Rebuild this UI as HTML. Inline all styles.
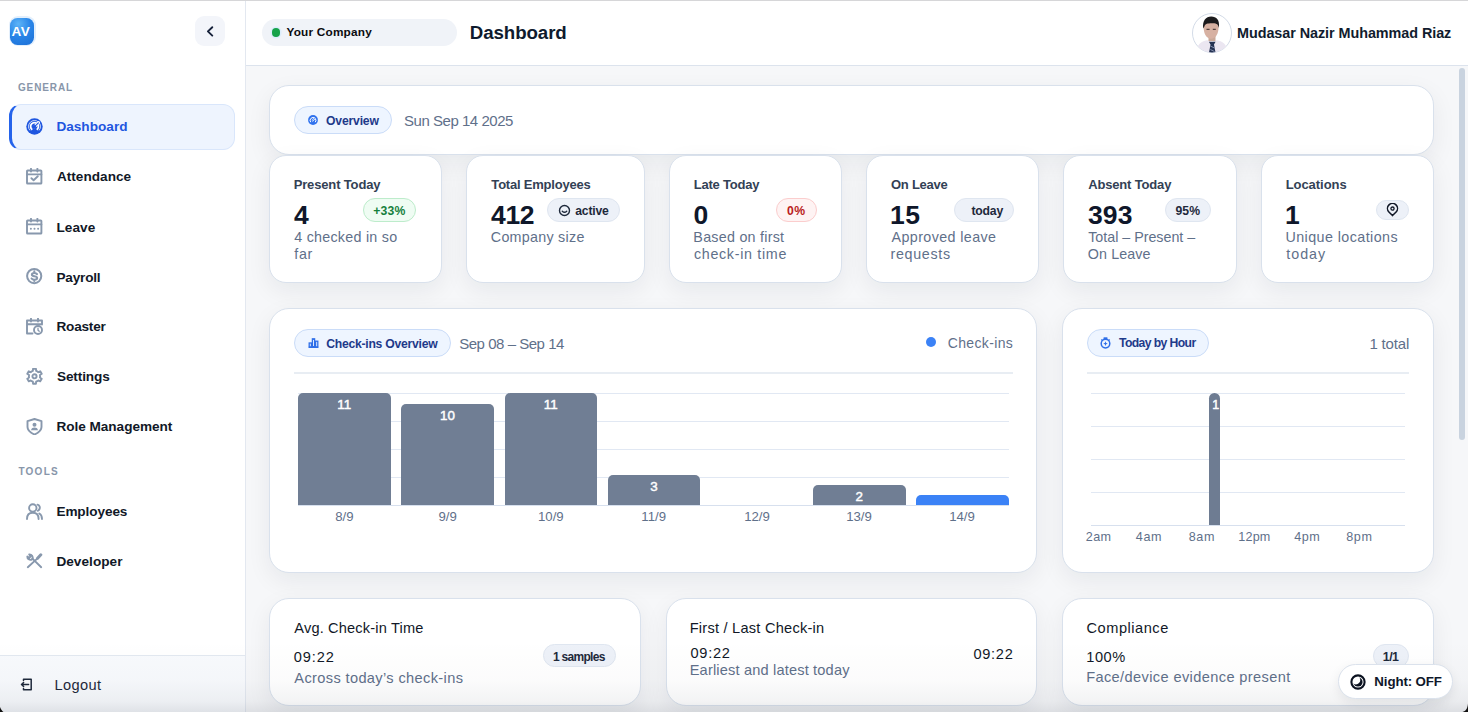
<!DOCTYPE html>
<html><head><meta charset="utf-8"><title>Dashboard</title>
<style>
*{box-sizing:border-box;margin:0;padding:0}
html,body{width:1468px;height:712px;overflow:hidden}
body{font-family:"Liberation Sans",sans-serif;background:#f6f7f9;position:relative}
.abs{position:absolute}
.t{position:absolute;white-space:nowrap}
.card{position:absolute;background:#fff;border:1px solid #d9e1ec;box-shadow:0 8px 24px rgba(15,23,42,0.065)}
.pill{position:absolute;border-radius:14px;background:#eef5ff;border:1px solid #cadcf8}
</style></head><body>
<div class="abs" style="left:0;top:0;width:245px;height:712px;background:#fff"></div><div class="abs" style="left:245px;top:0;width:1px;height:712px;background:#e3e8f0"></div><div class="abs" style="left:8.5px;top:16px;width:27px;height:30px;border-radius:9px;background:#e3effc"></div><div class="abs" style="left:10px;top:17.5px;width:24px;height:27px;border-radius:7.5px;background:radial-gradient(circle at 35% 22%,#5db4f7 0%,#2a86e8 45%,#1c6fd6 100%)"></div><div class="t" style="left:11.46px;top:24.68px;font-size:13.6px;line-height:13.6px;font-weight:bold;color:#fff;letter-spacing:0.600px;">AV</div><div class="abs" style="left:195px;top:16px;width:30px;height:30px;border-radius:9px;background:#f3f5fa"></div><svg class="abs" style="left:195px;top:16px" width="30" height="30" viewBox="0 0 30 30"><path d="M17.3 11.2 L12.9 15.4 L17.3 19.6" fill="none" stroke="#16213a" stroke-width="1.9" stroke-linecap="round" stroke-linejoin="round"/></svg><div class="t" style="left:17.90px;top:83.13px;font-size:10.0px;line-height:10.0px;font-weight:bold;color:#8896aa;letter-spacing:0.908px;">GENERAL</div><div class="abs" style="left:9px;top:103.5px;width:226px;height:46px;border-radius:12px;background:#eef4fe;border:1px solid #d9e6fb;border-left:3px solid #2563eb"></div><svg class="abs" style="left:25.5px;top:117.8px" width="17" height="17" viewBox="0 0 17 17">
<circle cx="8.5" cy="8.5" r="8.2" fill="#1f56e0"/>
<path d="M3.90 12.36 A6.0 6.0 0 1 1 13.10 12.36" fill="none" stroke="#dfe8fb" stroke-width="0.9"/>
<path d="M6.26 11.69 A3.9 3.9 0 1 1 10.74 11.69" fill="none" stroke="#fff" stroke-width="1.8"/>
<path d="M8.3 8.9 L12.6 4.6" stroke="#fff" stroke-width="2.8" stroke-linecap="round"/>
<path d="M8.3 8.9 L12.4 4.8" stroke="#1f56e0" stroke-width="1.2" stroke-linecap="round"/>
<circle cx="8.3" cy="8.9" r="1.8" fill="#1f56e0"/>
</svg><div class="t" style="left:56.42px;top:120.48px;font-size:13.6px;line-height:13.6px;font-weight:bold;color:#1f56e0;letter-spacing:0.009px;">Dashboard</div><div class="t" style="left:56.96px;top:170.48px;font-size:13.6px;line-height:13.6px;font-weight:bold;color:#111827;letter-spacing:0.011px;">Attendance</div><div class="t" style="left:56.42px;top:220.78px;font-size:13.6px;line-height:13.6px;font-weight:bold;color:#111827;letter-spacing:0.059px;">Leave</div><div class="t" style="left:56.42px;top:270.58px;font-size:13.6px;line-height:13.6px;font-weight:bold;color:#111827;letter-spacing:-0.187px;">Payroll</div><div class="t" style="left:56.42px;top:320.38px;font-size:13.6px;line-height:13.6px;font-weight:bold;color:#111827;letter-spacing:-0.195px;">Roaster</div><div class="t" style="left:56.96px;top:370.38px;font-size:13.6px;line-height:13.6px;font-weight:bold;color:#111827;letter-spacing:-0.119px;">Settings</div><div class="t" style="left:56.42px;top:420.28px;font-size:13.6px;line-height:13.6px;font-weight:bold;color:#111827;letter-spacing:-0.028px;">Role Management</div><div class="t" style="left:56.42px;top:505.48px;font-size:13.6px;line-height:13.6px;font-weight:bold;color:#111827;letter-spacing:-0.094px;">Employees</div><div class="t" style="left:56.42px;top:555.28px;font-size:13.6px;line-height:13.6px;font-weight:bold;color:#111827;letter-spacing:0.041px;">Developer</div><div class="t" style="left:18.40px;top:467.43px;font-size:10.0px;line-height:10.0px;font-weight:bold;color:#8896aa;letter-spacing:1.250px;">TOOLS</div><svg class="abs" style="left:25.5px;top:168px" width="17" height="17" viewBox="0 0 17 17"><rect x="1" y="2.5" width="14.4" height="13" rx="0.6" fill="none" stroke="#8898ad" stroke-width="1.9" stroke-linecap="round" stroke-linejoin="round"/><path d="M1 6.4 H15.4 M5 0.7 V3.6 M11.4 0.7 V3.6" fill="none" stroke="#8898ad" stroke-width="1.9" stroke-linecap="round" stroke-linejoin="round"/><path d="M5.4 10.2 L7.6 12.2 L11.8 8.2" fill="none" stroke="#8898ad" stroke-width="1.9" stroke-linecap="round" stroke-linejoin="round"/></svg><svg class="abs" style="left:25.5px;top:218px" width="17" height="17" viewBox="0 0 17 17"><rect x="1" y="2.5" width="14.4" height="13" rx="0.6" fill="none" stroke="#8898ad" stroke-width="1.9" stroke-linecap="round" stroke-linejoin="round"/><path d="M1 6.4 H15.4 M5 0.7 V3.6 M11.4 0.7 V3.6" fill="none" stroke="#8898ad" stroke-width="1.9" stroke-linecap="round" stroke-linejoin="round"/><circle cx="4.9" cy="10.8" r="1" fill="#8898ad"/><circle cx="8.5" cy="10.8" r="1" fill="#8898ad"/><circle cx="12.1" cy="10.8" r="1" fill="#8898ad"/></svg><svg class="abs" style="left:25.5px;top:268px" width="17" height="17" viewBox="0 0 17 17"><circle cx="8.2" cy="8.1" r="7.1" fill="none" stroke="#8898ad" stroke-width="2"/><path d="M11 6.1 C10.5 5.3 9.6 5 8.3 5 C6.8 5 5.9 5.7 5.9 6.7 C5.9 8.9 11.1 7.6 11.1 10 C11.1 11 10.1 11.7 8.4 11.7 C7.1 11.7 6.1 11.3 5.6 10.5 M8.3 3.4 V5 M8.3 11.7 V13" fill="none" stroke="#8898ad" stroke-width="2.1" stroke-linecap="round"/></svg><svg class="abs" style="left:25.5px;top:318px" width="17" height="17" viewBox="0 0 17 17"><path d="M6.5 15.5 H1 V2.5 H16 V6.5 M1 6.3 H16 M5 0.6 V3.5 M12 0.6 V3.5" fill="none" stroke="#8898ad" stroke-width="1.9" stroke-linecap="round" stroke-linejoin="round"/><circle cx="12" cy="12" r="4" fill="none" stroke="#8898ad" stroke-width="1.9" stroke-linecap="round" stroke-linejoin="round"/><path d="M12 10.2 V12.1 L13.2 13.2" fill="none" stroke="#8898ad" stroke-width="1.3" stroke-linecap="round"/></svg><svg class="abs" style="left:25.5px;top:368px" width="17" height="17" viewBox="0 0 17 17"><path d="M5.70 3.45 L6.86 2.94 L7.05 0.84 L9.95 0.84 L10.14 2.94 L11.30 3.45 L12.32 4.20 L14.24 3.31 L15.69 5.83 L13.96 7.04 L14.10 8.30 L13.96 9.56 L15.69 10.77 L14.24 13.29 L12.32 12.40 L11.30 13.15 L10.14 13.66 L9.95 15.76 L7.05 15.76 L6.86 13.66 L5.70 13.15 L4.68 12.40 L2.76 13.29 L1.31 10.77 L3.04 9.56 L2.90 8.30 L3.04 7.04 L1.31 5.83 L2.76 3.31 L4.68 4.20 Z" fill="none" stroke="#8898ad" stroke-width="1.9" stroke-linecap="round" stroke-linejoin="round"/><circle cx="8.5" cy="8.3" r="2.1" fill="none" stroke="#8898ad" stroke-width="1.9" stroke-linecap="round" stroke-linejoin="round"/></svg><svg class="abs" style="left:25.5px;top:418px" width="17" height="17" viewBox="0 0 17 17"><path d="M8.5 1 L15.5 3.2 V9 C15.5 12.5 12.5 14.8 8.5 16.5 C4.5 14.8 1.5 12.5 1.5 9 V3.2 Z" fill="none" stroke="#8898ad" stroke-width="1.9" stroke-linecap="round" stroke-linejoin="round"/><circle cx="8.5" cy="6.8" r="2" fill="#8898ad"/><path d="M5 12.2 C5.3 10 6.8 9.4 8.5 9.4 C10.2 9.4 11.7 10 12 12.2 Z" fill="#8898ad"/></svg><svg class="abs" style="left:25.5px;top:503px" width="17" height="17" viewBox="0 0 17 17"><circle cx="6.8" cy="5" r="3.7" fill="none" stroke="#8898ad" stroke-width="1.9" stroke-linecap="round" stroke-linejoin="round"/><path d="M1 16 C1 11.6 3.5 9.8 6.8 9.8 C10.1 9.8 12.6 11.6 12.6 16" fill="none" stroke="#8898ad" stroke-width="1.9" stroke-linecap="round" stroke-linejoin="round"/><path d="M11.5 1.6 C13.5 2.2 14.3 4.2 13.5 6 C13.1 6.9 12.6 7.4 11.9 7.8 M13.3 10.5 C15 11.5 16 13.3 16 16" fill="none" stroke="#8898ad" stroke-width="1.9" stroke-linecap="round" stroke-linejoin="round"/></svg><svg class="abs" style="left:25.5px;top:553px" width="17" height="17" viewBox="0 0 17 17"><path d="M1.8 14.2 L11.2 5.6" fill="none" stroke="#8898ad" stroke-width="1.9" stroke-linecap="round" stroke-linejoin="round"/><path d="M11.6 5.2 L14.8 1.8" fill="none" stroke="#8898ad" stroke-width="3" stroke-linecap="round"/><path d="M15.2 14.2 L6.2 5.4" fill="none" stroke="#8898ad" stroke-width="1.9" stroke-linecap="round" stroke-linejoin="round"/><path d="M6.6 5.8 C7.3 3.6 5.8 1.2 3.2 1.4 L4.6 3.4 L3.4 4.8 L1.3 3.6 C1.2 6 3.6 7.4 5.8 6.6" fill="none" stroke="#8898ad" stroke-width="1.9" stroke-linecap="round" stroke-linejoin="round"/></svg><div class="abs" style="left:0;top:655px;width:245px;height:57px;background:#f8fafd;border-top:1px solid #e2e8f0"></div><svg class="abs" style="left:20px;top:678px" width="13" height="13" viewBox="0 0 13 13"><path d="M3.5 1.2 H11.2 V11.8 H3.5 M3.5 1.2 V2.6 M3.5 11.8 V10.4 M8.6 6.5 H1.6 M3.6 4.5 L1.5 6.5 L3.6 8.5" fill="none" stroke="#1e293b" stroke-width="1.5" stroke-linecap="round" stroke-linejoin="round"/></svg><div class="t" style="left:54.53px;top:677.84px;font-size:14.6px;line-height:14.6px;font-weight:normal;color:#1e293b;letter-spacing:0.373px;">Logout</div><div class="abs" style="left:246px;top:0;width:1222px;height:66px;background:#fff;border-bottom:1px solid #dce3ed"></div><div class="abs" style="left:0;top:0;width:1468px;height:1px;background:#d6d6d8"></div><div class="abs" style="left:262px;top:19px;width:195px;height:27px;border-radius:13.5px;background:#f0f3f8"></div><div class="abs" style="left:271.8px;top:28.2px;width:8.4px;height:8.4px;border-radius:50%;background:#16a34a;box-shadow:0 0 0 1.6px #ddeefc"></div><div class="t" style="left:286.52px;top:26.71px;font-size:11.8px;line-height:11.8px;font-weight:bold;color:#0b0b0f;letter-spacing:0.197px;">Your Company</div><div class="t" style="left:469.78px;top:24.27px;font-size:18.7px;line-height:18.7px;font-weight:bold;color:#0f1b2e;letter-spacing:-0.073px;">Dashboard</div><svg class="abs" style="left:1192px;top:12.5px" width="40" height="40" viewBox="0 0 40 40">
<defs><clipPath id="av"><circle cx="20" cy="20" r="19.4"/></clipPath></defs>
<circle cx="20" cy="20" r="19.5" fill="#fff" stroke="#d3dbe7" stroke-width="1"/>
<g clip-path="url(#av)">
<path d="M4 40 C5 31 9 28.5 15 27.2 L20 28.5 L25 27.2 C31 28.5 35 31 36 40 Z" fill="#ebe6f1"/>
<rect x="16.5" y="22" width="7" height="6" fill="#c9a898"/>
<path d="M11.6 13 C11.4 21 14.5 25.6 19 25.8 C23.6 25.6 26.8 21 26.6 13 C26 9 23.5 7.5 19 7.5 C14.5 7.5 12 9 11.6 13 Z" fill="#d7b1a2"/>
<path d="M11.2 15.5 C10.2 7.5 14 3.5 19.2 3.5 C24.5 3.5 28 7 26.9 15 C26.2 11.5 25 10.3 21 10.2 C17 10 13 10.5 12.6 13 C12.2 13.8 11.8 14.6 11.2 15.5 Z" fill="#1c1b1d"/>
<path d="M14.5 16.3 H17.6 M20.8 16.3 H23.8" stroke="#3a2c2a" stroke-width="1"/>
<path d="M16.9 28.8 L23.6 28.8 L22 31.5 L23.6 40 L16.9 40 L18.5 31.5 Z" fill="#243252"/>
<path d="M18.3 33 L22.5 35 M18.3 36.5 L22.5 38.5" stroke="#8b96b5" stroke-width="0.9"/>
</g></svg><div class="t" style="left:1237.06px;top:25.61px;font-size:14.4px;line-height:14.4px;font-weight:bold;color:#111c2e;letter-spacing:-0.063px;">Mudasar Nazir Muhammad Riaz</div><div class="abs" style="left:1459px;top:68px;width:6px;height:372px;border-radius:3px;background:#c9d3df"></div><div class="card" style="left:269px;top:85px;width:1165px;height:70px;border-radius:20px"></div><div class="pill" style="left:294px;top:106px;width:97.5px;height:28px"></div><svg class="abs" style="left:307.5px;top:114.8px" width="10" height="10" viewBox="0 0 10 10"><circle cx="5" cy="5" r="4.9" fill="#2f72ee"/><path d="M2.7 7.2 A2.9 2.9 0 1 1 7.3 7.2" fill="none" stroke="#fff" stroke-width="1"/><path d="M4.6 5.6 L6.6 3.4" stroke="#fff" stroke-width="1.6" stroke-linecap="round"/><path d="M4.6 5.6 L6.5 3.5" stroke="#2f72ee" stroke-width="0.8" stroke-linecap="round"/></svg><div class="t" style="left:326.01px;top:114.67px;font-size:12.2px;line-height:12.2px;font-weight:bold;color:#1e3a8a;letter-spacing:-0.186px;">Overview</div><div class="t" style="left:404.02px;top:112.50px;font-size:15px;line-height:15px;font-weight:normal;color:#5f708a;letter-spacing:-0.470px;">Sun Sep 14 2025</div><div class="card" style="left:269px;top:155px;width:173px;height:128px;border-radius:17px"></div><div class="t" style="left:293.65px;top:178.39px;font-size:13px;line-height:13px;font-weight:bold;color:#334155;letter-spacing:-0.146px;">Present Today</div><div class="t" style="left:294.10px;top:201.76px;font-size:26.5px;line-height:26.5px;font-weight:bold;color:#0f172a;letter-spacing:0.000px;">4</div><div class="t" style="left:294.21px;top:230.19px;font-size:14.3px;line-height:14.3px;font-weight:normal;color:#5f708a;letter-spacing:0.255px;">4 checked in so</div><div class="t" style="left:294.36px;top:247.49px;font-size:14.3px;line-height:14.3px;font-weight:normal;color:#5f708a;letter-spacing:0.600px;">far</div><div class="card" style="left:466px;top:155px;width:179px;height:128px;border-radius:17px"></div><div class="t" style="left:491.37px;top:178.39px;font-size:13px;line-height:13px;font-weight:bold;color:#334155;letter-spacing:-0.209px;">Total Employees</div><div class="t" style="left:491.10px;top:201.76px;font-size:26.5px;line-height:26.5px;font-weight:bold;color:#0f172a;letter-spacing:-0.349px;">412</div><div class="t" style="left:490.79px;top:230.19px;font-size:14.3px;line-height:14.3px;font-weight:normal;color:#5f708a;letter-spacing:0.272px;">Company size</div><div class="card" style="left:669px;top:155px;width:173px;height:128px;border-radius:17px"></div><div class="t" style="left:693.65px;top:178.39px;font-size:13px;line-height:13px;font-weight:bold;color:#334155;letter-spacing:-0.191px;">Late Today</div><div class="t" style="left:693.57px;top:201.76px;font-size:26.5px;line-height:26.5px;font-weight:bold;color:#0f172a;letter-spacing:0.000px;">0</div><div class="t" style="left:693.36px;top:230.19px;font-size:14.3px;line-height:14.3px;font-weight:normal;color:#5f708a;letter-spacing:0.252px;">Based on first</div><div class="t" style="left:693.93px;top:247.49px;font-size:14.3px;line-height:14.3px;font-weight:normal;color:#5f708a;letter-spacing:0.685px;">check-in time</div><div class="card" style="left:866px;top:155px;width:173px;height:128px;border-radius:17px"></div><div class="t" style="left:890.98px;top:178.39px;font-size:13px;line-height:13px;font-weight:bold;color:#334155;letter-spacing:-0.241px;">On Leave</div><div class="t" style="left:889.91px;top:201.76px;font-size:26.5px;line-height:26.5px;font-weight:bold;color:#0f172a;letter-spacing:0.600px;">15</div><div class="t" style="left:891.50px;top:230.19px;font-size:14.3px;line-height:14.3px;font-weight:normal;color:#5f708a;letter-spacing:0.399px;">Approved leave</div><div class="t" style="left:890.57px;top:247.49px;font-size:14.3px;line-height:14.3px;font-weight:normal;color:#5f708a;letter-spacing:0.670px;">requests</div><div class="card" style="left:1063px;top:155px;width:174px;height:128px;border-radius:17px"></div><div class="t" style="left:1088.17px;top:178.39px;font-size:13px;line-height:13px;font-weight:bold;color:#334155;letter-spacing:-0.157px;">Absent Today</div><div class="t" style="left:1087.97px;top:201.76px;font-size:26.5px;line-height:26.5px;font-weight:bold;color:#0f172a;letter-spacing:0.117px;">393</div><div class="t" style="left:1088.21px;top:230.19px;font-size:14.3px;line-height:14.3px;font-weight:normal;color:#5f708a;letter-spacing:-0.019px;">Total – Present –</div><div class="t" style="left:1087.86px;top:247.49px;font-size:14.3px;line-height:14.3px;font-weight:normal;color:#5f708a;letter-spacing:0.089px;">On Leave</div><div class="card" style="left:1261px;top:155px;width:173px;height:128px;border-radius:17px"></div><div class="t" style="left:1285.65px;top:178.39px;font-size:13px;line-height:13px;font-weight:bold;color:#334155;letter-spacing:-0.045px;">Locations</div><div class="t" style="left:1284.91px;top:201.76px;font-size:26.5px;line-height:26.5px;font-weight:bold;color:#0f172a;letter-spacing:0.000px;">1</div><div class="t" style="left:1285.43px;top:230.19px;font-size:14.3px;line-height:14.3px;font-weight:normal;color:#5f708a;letter-spacing:0.435px;">Unique locations</div><div class="t" style="left:1286.29px;top:247.49px;font-size:14.3px;line-height:14.3px;font-weight:normal;color:#5f708a;letter-spacing:0.988px;">today</div><div class="abs" style="left:362.6px;top:198px;width:53.89999999999998px;height:24px;border-radius:12.0px;background:#effcf3;border:1px solid #bdeccb"></div><div class="t" style="left:373.31px;top:204.87px;font-size:12.2px;line-height:12.2px;font-weight:bold;color:#15803d;letter-spacing:0.152px;">+33%</div><div class="abs" style="left:547.1px;top:198px;width:72.60000000000002px;height:24px;border-radius:12.0px;background:#edf1f8;border:1px solid #dfe6f0"></div><div class="t" style="left:575.20px;top:204.87px;font-size:12.2px;line-height:12.2px;font-weight:bold;color:#1e293b;letter-spacing:-0.183px;">active</div><svg class="abs" style="left:557.5px;top:203.5px" width="13" height="13" viewBox="0 0 13 13"><circle cx="6.5" cy="6.5" r="5" fill="none" stroke="#1e293b" stroke-width="1.4"/><path d="M4.3 7.2 Q6.5 9.4 8.7 7.2" fill="none" stroke="#1e293b" stroke-width="1.4" stroke-linecap="round"/></svg><div class="abs" style="left:775.9px;top:198px;width:41.5px;height:24px;border-radius:12.0px;background:#fef3f3;border:1px solid #fbcdcd"></div><div class="t" style="left:786.97px;top:204.87px;font-size:12.2px;line-height:12.2px;font-weight:bold;color:#b91c1c;letter-spacing:0.600px;">0%</div><div class="abs" style="left:954.2px;top:198px;width:59.89999999999998px;height:24px;border-radius:12.0px;background:#edf1f8;border:1px solid #dfe6f0"></div><div class="t" style="left:971.48px;top:204.87px;font-size:12.2px;line-height:12.2px;font-weight:bold;color:#1e293b;letter-spacing:-0.198px;">today</div><div class="abs" style="left:1164.6px;top:198px;width:46.90000000000009px;height:24px;border-radius:12.0px;background:#edf1f8;border:1px solid #dfe6f0"></div><div class="t" style="left:1175.43px;top:204.87px;font-size:12.2px;line-height:12.2px;font-weight:bold;color:#1e293b;letter-spacing:0.085px;">95%</div><div class="abs" style="left:1376.1px;top:199.5px;width:32.600000000000136px;height:20.5px;border-radius:10.25px;background:#edf1f8;border:1px solid #dfe6f0"></div><svg class="abs" style="left:1386px;top:203px" width="13" height="14" viewBox="0 0 13 14"><path d="M6.5 12.6 L2.9 8.9 A5 5 0 1 1 10.1 8.9 Z" fill="none" stroke="#111827" stroke-width="1.5" stroke-linejoin="round"/><circle cx="6.5" cy="5.6" r="1.6" fill="none" stroke="#111827" stroke-width="1.3"/></svg><div class="card" style="left:269px;top:308px;width:768px;height:265px;border-radius:20px"></div><div class="pill" style="left:294px;top:329px;width:157px;height:27.5px"></div><svg class="abs" style="left:307.5px;top:337.5px" width="11" height="10" viewBox="0 0 11 10"><path d="M0.8 9.2 H10.2" stroke="#2f6fe8" stroke-width="1.6"/><rect x="1.2" y="5" width="2.2" height="4.2" fill="none" stroke="#2f6fe8" stroke-width="1.3"/><rect x="4.4" y="0.8" width="2.2" height="8.4" fill="none" stroke="#2f6fe8" stroke-width="1.3"/><rect x="7.6" y="3.2" width="2.2" height="6" fill="none" stroke="#2f6fe8" stroke-width="1.3"/></svg><div class="t" style="left:326.21px;top:337.57px;font-size:12.2px;line-height:12.2px;font-weight:bold;color:#1e3a8a;letter-spacing:-0.257px;">Check-ins Overview</div><div class="t" style="left:459.22px;top:336.40px;font-size:15px;line-height:15px;font-weight:normal;color:#5f708a;letter-spacing:-0.471px;">Sep 08 – Sep 14</div><div class="abs" style="left:926px;top:337.4px;width:10px;height:10px;border-radius:50%;background:#3b82f6"></div><div class="t" style="left:947.70px;top:336.35px;font-size:14px;line-height:14px;font-weight:normal;color:#5f708a;letter-spacing:0.357px;">Check-ins</div><div class="abs" style="left:294px;top:372px;width:718.5px;height:2px;background:#e8edf3"></div><div class="abs" style="left:298px;top:393px;width:710.5px;height:1px;background:#e1e8f3"></div><div class="abs" style="left:298px;top:421px;width:710.5px;height:1px;background:#e1e8f3"></div><div class="abs" style="left:298px;top:449px;width:710.5px;height:1px;background:#e1e8f3"></div><div class="abs" style="left:298px;top:477px;width:710.5px;height:1px;background:#e1e8f3"></div><div class="abs" style="left:298px;top:505px;width:710.5px;height:1px;background:#d7e0ee"></div><div class="abs" style="left:298px;top:393.3px;width:92.8px;height:112.09999999999997px;background:#707e94;border-radius:5px 5px 0 0"></div><div class="t" style="left:337.26px;top:398.15px;font-size:13.4px;line-height:13.4px;font-weight:normal;color:#fff;letter-spacing:0.000px;-webkit-text-stroke:0.45px #fff;">11</div><div class="t" style="left:335.26px;top:510.02px;font-size:13.2px;line-height:13.2px;font-weight:normal;color:#5f708a;letter-spacing:0.000px;">8/9</div><div class="abs" style="left:401.3px;top:403.8px;width:92.8px;height:101.59999999999997px;background:#707e94;border-radius:5px 5px 0 0"></div><div class="t" style="left:440.00px;top:408.65px;font-size:13.4px;line-height:13.4px;font-weight:normal;color:#fff;letter-spacing:0.000px;-webkit-text-stroke:0.45px #fff;">10</div><div class="t" style="left:438.53px;top:510.02px;font-size:13.2px;line-height:13.2px;font-weight:normal;color:#5f708a;letter-spacing:0.000px;">9/9</div><div class="abs" style="left:504.6px;top:393.3px;width:92.8px;height:112.09999999999997px;background:#707e94;border-radius:5px 5px 0 0"></div><div class="t" style="left:543.86px;top:398.15px;font-size:13.4px;line-height:13.4px;font-weight:normal;color:#fff;letter-spacing:0.000px;-webkit-text-stroke:0.45px #fff;">11</div><div class="t" style="left:537.97px;top:510.02px;font-size:13.2px;line-height:13.2px;font-weight:normal;color:#5f708a;letter-spacing:0.000px;">10/9</div><div class="abs" style="left:607.5px;top:474.9px;width:92.8px;height:30.5px;background:#707e94;border-radius:5px 5px 0 0"></div><div class="t" style="left:650.21px;top:479.75px;font-size:13.4px;line-height:13.4px;font-weight:normal;color:#fff;letter-spacing:0.000px;-webkit-text-stroke:0.45px #fff;">3</div><div class="t" style="left:641.36px;top:510.02px;font-size:13.2px;line-height:13.2px;font-weight:normal;color:#5f708a;letter-spacing:0.000px;">11/9</div><div class="t" style="left:744.16px;top:510.02px;font-size:13.2px;line-height:13.2px;font-weight:normal;color:#5f708a;letter-spacing:0.000px;">12/9</div><div class="abs" style="left:812.8px;top:485.2px;width:92.8px;height:20.19999999999999px;background:#707e94;border-radius:5px 5px 0 0"></div><div class="t" style="left:855.45px;top:490.05px;font-size:13.4px;line-height:13.4px;font-weight:normal;color:#fff;letter-spacing:0.000px;-webkit-text-stroke:0.45px #fff;">2</div><div class="t" style="left:846.16px;top:510.02px;font-size:13.2px;line-height:13.2px;font-weight:normal;color:#5f708a;letter-spacing:0.000px;">13/9</div><div class="abs" style="left:915.8px;top:495.2px;width:92.8px;height:10.199999999999989px;background:#3b82f6;border-radius:5px 5px 0 0"></div><div class="t" style="left:949.16px;top:510.02px;font-size:13.2px;line-height:13.2px;font-weight:normal;color:#5f708a;letter-spacing:0.000px;">14/9</div><div class="card" style="left:1062px;top:308px;width:371.5px;height:265px;border-radius:20px"></div><div class="pill" style="left:1086.7px;top:328.5px;width:122.79999999999995px;height:28.0px"></div><svg class="abs" style="left:1100px;top:336.8px" width="11" height="12" viewBox="0 0 11 12"><rect x="3.6" y="0.3" width="3.8" height="1.8" fill="#2f6fe8"/><circle cx="5.5" cy="6.6" r="4.3" fill="none" stroke="#2f6fe8" stroke-width="1.5"/><path d="M1.3 3.4 L2.3 2.4 M9.7 3.4 L8.7 2.4" stroke="#2f6fe8" stroke-width="1.3"/><path d="M5.5 4.3 L6.2 6 L7.8 6.6 L6.2 7.2 L5.5 8.9 L4.8 7.2 L3.2 6.6 L4.8 6 Z" fill="#2f6fe8"/></svg><div class="t" style="left:1118.98px;top:337.07px;font-size:12.2px;line-height:12.2px;font-weight:bold;color:#1e3a8a;letter-spacing:-0.598px;">Today by Hour</div><div class="t" style="left:1369.38px;top:336.20px;font-size:15px;line-height:15px;font-weight:normal;color:#5f708a;letter-spacing:-0.146px;">1 total</div><div class="abs" style="left:1086.7px;top:372px;width:322.3px;height:2px;background:#e8edf3"></div><div class="abs" style="left:1090.6px;top:393px;width:314.2px;height:1px;background:#e1e8f3"></div><div class="abs" style="left:1090.6px;top:426px;width:314.2px;height:1px;background:#e1e8f3"></div><div class="abs" style="left:1090.6px;top:459px;width:314.2px;height:1px;background:#e1e8f3"></div><div class="abs" style="left:1090.6px;top:492px;width:314.2px;height:1px;background:#e1e8f3"></div><div class="abs" style="left:1090.6px;top:525px;width:314.2px;height:1px;background:#d7e0ee"></div><div class="abs" style="left:1209.4px;top:393.3px;width:11px;height:132px;background:#6e7c92;border-radius:5.5px 5.5px 0 0"></div><div class="t" style="left:1212.26px;top:399.42px;font-size:12.5px;line-height:12.5px;font-weight:normal;color:#fff;letter-spacing:0.000px;-webkit-text-stroke:0.45px #fff;">1</div><div class="t" style="left:1085.67px;top:530.73px;font-size:12.6px;line-height:12.6px;font-weight:normal;color:#5f708a;letter-spacing:0.471px;">2am</div><div class="t" style="left:1135.85px;top:530.73px;font-size:12.6px;line-height:12.6px;font-weight:normal;color:#5f708a;letter-spacing:0.600px;">4am</div><div class="t" style="left:1188.70px;top:530.73px;font-size:12.6px;line-height:12.6px;font-weight:normal;color:#5f708a;letter-spacing:0.600px;">8am</div><div class="t" style="left:1238.36px;top:530.73px;font-size:12.6px;line-height:12.6px;font-weight:normal;color:#5f708a;letter-spacing:0.167px;">12pm</div><div class="t" style="left:1294.15px;top:530.73px;font-size:12.6px;line-height:12.6px;font-weight:normal;color:#5f708a;letter-spacing:0.600px;">4pm</div><div class="t" style="left:1346.20px;top:530.73px;font-size:12.6px;line-height:12.6px;font-weight:normal;color:#5f708a;letter-spacing:0.600px;">8pm</div><div class="card" style="left:269px;top:598px;width:372px;height:108px;border-radius:20px"></div><div class="t" style="left:294.30px;top:620.84px;font-size:14.6px;line-height:14.6px;font-weight:normal;color:#111827;letter-spacing:0.164px;">Avg. Check-in Time</div><div class="t" style="left:293.79px;top:649.64px;font-size:14.6px;line-height:14.6px;font-weight:normal;color:#111827;letter-spacing:0.917px;">09:22</div><div class="t" style="left:294.30px;top:670.54px;font-size:14.6px;line-height:14.6px;font-weight:normal;color:#5f708a;letter-spacing:0.362px;">Across today’s check-ins</div><div class="abs" style="left:542.7px;top:644.3px;width:73.29999999999995px;height:23.200000000000045px;border-radius:11.600000000000023px;background:#edf1f8;border:1px solid #dfe6f0"></div><div class="t" style="left:552.88px;top:650.94px;font-size:12px;line-height:12px;font-weight:bold;color:#1e293b;letter-spacing:-0.685px;">1 samples</div><div class="card" style="left:666px;top:598px;width:371px;height:108px;border-radius:20px"></div><div class="t" style="left:689.73px;top:620.54px;font-size:14.6px;line-height:14.6px;font-weight:normal;color:#111827;letter-spacing:0.233px;">First / Last Check-in</div><div class="t" style="left:690.39px;top:646.44px;font-size:14.6px;line-height:14.6px;font-weight:normal;color:#111827;letter-spacing:0.767px;">09:22</div><div class="t" style="left:689.73px;top:663.44px;font-size:14.6px;line-height:14.6px;font-weight:normal;color:#5f708a;letter-spacing:0.167px;">Earliest and latest today</div><div class="t" style="left:973.39px;top:646.74px;font-size:14.6px;line-height:14.6px;font-weight:normal;color:#111827;letter-spacing:0.717px;">09:22</div><div class="card" style="left:1062px;top:598px;width:371.5px;height:108px;border-radius:20px"></div><div class="t" style="left:1086.57px;top:621.04px;font-size:14.6px;line-height:14.6px;font-weight:normal;color:#111827;letter-spacing:0.514px;">Compliance</div><div class="t" style="left:1086.20px;top:649.84px;font-size:14.6px;line-height:14.6px;font-weight:normal;color:#111827;letter-spacing:0.600px;">100%</div><div class="t" style="left:1086.13px;top:670.04px;font-size:14.6px;line-height:14.6px;font-weight:normal;color:#5f708a;letter-spacing:0.382px;">Face/device evidence present</div><div class="abs" style="left:1372.9px;top:644px;width:36.0px;height:24px;border-radius:12.0px;background:#edf1f8;border:1px solid #dfe6f0"></div><div class="t" style="left:1382.86px;top:650.70px;font-size:12.4px;line-height:12.4px;font-weight:bold;color:#1e293b;letter-spacing:-0.600px;">1/1</div><div class="abs" style="left:0;top:640px;width:1468px;height:72px;background:linear-gradient(to bottom,rgba(20,30,50,0) 0%,rgba(20,30,50,0.015) 55%,rgba(20,30,50,0.05) 85%,rgba(20,30,50,0.11) 100%);pointer-events:none"></div><div class="abs" style="left:1338px;top:663.5px;width:115px;height:35px;border-radius:17.5px;background:#fff;border:1px solid #dbe2ec;box-shadow:0 4px 12px rgba(15,23,42,0.08)"></div><svg class="abs" style="left:1350.3px;top:674px" width="16" height="16" viewBox="0 0 16 16"><circle cx="8" cy="8" r="4.6" fill="#0b1220"/><circle cx="5.9" cy="6" r="4.4" fill="#fff"/><circle cx="8" cy="8" r="6.6" fill="none" stroke="#0b1220" stroke-width="2.1"/></svg><div class="t" style="left:1374.34px;top:674.64px;font-size:13.3px;line-height:13.3px;font-weight:bold;color:#0f172a;letter-spacing:-0.118px;">Night: OFF</div><svg class="abs" style="left:1456px;top:700px" width="12" height="12" viewBox="0 0 12 12"><path d="M12 3.5 C11.5 8.5 10 11.2 6.5 12 H12 Z" fill="#111"/></svg><svg class="abs" style="left:0;top:704px" width="8" height="8" viewBox="0 0 8 8"><path d="M0 3 C1 5.5 2.2 7 3.5 8 H0 Z" fill="#111"/></svg>
</body></html>
